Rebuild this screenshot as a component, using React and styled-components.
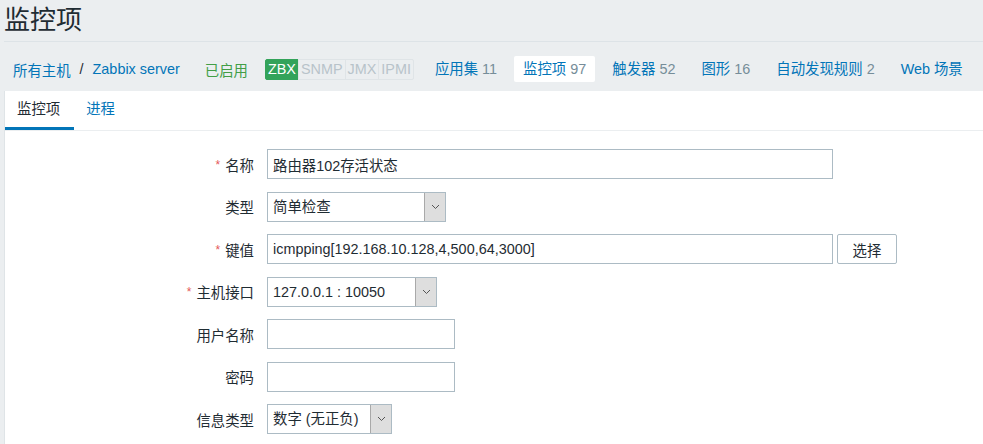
import styled, { createGlobalStyle } from "styled-components";

const GlobalStyle = createGlobalStyle`
  html, body {
    margin: 0;
    padding: 0;
    background: #ebeef0;
  }
  body {
    font-family: "Liberation Sans", Arial, "Noto Sans CJK SC", sans-serif;
    font-size: 14.4px;
    color: #1f2c33;
    overflow: hidden;
  }
`;

const nav = [
  { name: "应用集", count: 11 },
  { name: "监控项", count: 97, active: true },
  { name: "触发器", count: 52 },
  { name: "图形", count: 16 },
  { name: "自动发现规则", count: 2 },
  { name: "Web 场景" },
];

const tags = [
  { name: "ZBX", on: true },
  { name: "SNMP" },
  { name: "JMX" },
  { name: "IPMI" },
];

function Chevron() {
  return (
    <svg width="9" height="6" viewBox="0 0 9 6">
      <path d="M1 1l3.5 3.5L8 1" fill="none" stroke="#555" strokeWidth="1" />
    </svg>
  );
}

function Select({ value, width }) {
  return (
    <SelectBox width={width}>
      <span>{value}</span>
      <SelectButton>
        <Chevron />
      </SelectButton>
    </SelectBox>
  );
}

export default function App() {
  return (
    <Page>
      <GlobalStyle />
      <Title>监控项</Title>

      <Nav>
        <Crumbs>
          <Link>所有主机</Link>
          <Sep>/</Sep>
          <Link>Zabbix server</Link>
        </Crumbs>
        <Status>已启用</Status>
        <Tags>
          {tags.map((t) => (
            <Tag key={t.name} on={t.on}>{t.name}</Tag>
          ))}
        </Tags>
        <NavTabs>
          {nav.map((n) => (
            <NavTab key={n.name} active={n.active}>
              {n.name}
              {n.count !== undefined && <Count> {n.count}</Count>}
            </NavTab>
          ))}
        </NavTabs>
      </Nav>

      <Panel>
        <TabBar>
          <Tab active>监控项</Tab>
          <Tab>进程</Tab>
        </TabBar>

        <Form>
          <Row>
            <Label required>名称</Label>
            <Input width={566} value="路由器102存活状态" readOnly />
          </Row>
          <Row>
            <Label>类型</Label>
            <Select value="简单检查" width={179} />
          </Row>
          <Row>
            <Label required>键值</Label>
            <Inline>
              <Input width={566} value="icmpping[192.168.10.128,4,500,64,3000]" readOnly />
              <Button>选择</Button>
            </Inline>
          </Row>
          <Row>
            <Label required>主机接口</Label>
            <Select value="127.0.0.1 : 10050" width={170} />
          </Row>
          <Row>
            <Label>用户名称</Label>
            <Input width={188} readOnly />
          </Row>
          <Row>
            <Label>密码</Label>
            <Input width={188} readOnly />
          </Row>
          <Row>
            <Label>信息类型</Label>
            <Select value="数字 (无正负)" width={125} />
          </Row>
        </Form>
      </Panel>
    </Page>
  );
}

const Page = styled.div`
  padding-left: 4px;
  height: 444px;
  display: flex;
  flex-direction: column;
`;

const Title = styled.h1`
  margin: 0;
  font-size: 26px;
  font-weight: normal;
  line-height: 41px;
  color: #1f2c33;
  border-bottom: 1px solid #dde3e7;
`;

const Nav = styled.div`
  display: flex;
  align-items: center;
  padding: 14px 0 9px 9px;
  white-space: nowrap;
`;

const Crumbs = styled.div`
  display: flex;
  align-items: center;
`;

const Link = styled.span`
  color: #0275b8;
`;

const Sep = styled.span`
  margin: 0 9px;
  color: #1f2c33;
`;

const Status = styled.span`
  margin-left: 25px;
  color: #429e47;
`;

const Tags = styled.div`
  display: flex;
  margin-left: 17px;
`;

const Tag = styled.span`
  height: 21px;
  line-height: 19px;
  box-sizing: border-box;
  padding: 0 2px;
  border: 1px solid ${(p) => (p.on ? "#33a35a" : "#dfe4e7")};
  background: ${(p) => (p.on ? "#33a35a" : "#ebeef0")};
  color: ${(p) => (p.on ? "#fff" : "#b8c3ca")};
  border-radius: ${(p) => (p.on ? "2px 0 0 2px" : "0")};
  &:last-child {
    border-radius: 0 2px 2px 0;
  }
  & + & {
    margin-left: -1px;
  }
`;

const NavTabs = styled.div`
  display: flex;
  gap: 8px;
  margin-left: 12px;
`;

const NavTab = styled.span`
  height: 26px;
  line-height: 26px;
  padding: 0 9px;
  color: #0275b8;
  background: ${(p) => (p.active ? "#fff" : "transparent")};
  border-radius: 2px;
`;

const Count = styled.span`
  color: #768d99;
`;

const Panel = styled.div`
  flex: 1;
  background: #fff;
  border-left: 1px solid #dfe4e7;
`;

const TabBar = styled.div`
  display: flex;
  border-bottom: 1px solid #ebeef0;
`;

const Tab = styled.div`
  box-sizing: border-box;
  height: 39px;
  line-height: 36px;
  padding: 0 14px 0 12px;
  color: ${(p) => (p.active ? "#1f2c33" : "#0275b8")};
  border-bottom: 3px solid ${(p) => (p.active ? "#0275b8" : "transparent")};
`;

const Form = styled.div`
  display: flex;
  flex-direction: column;
  gap: 12.5px;
  padding-top: 18px;
`;

const Row = styled.div`
  display: grid;
  grid-template-columns: 249px auto;
  column-gap: 13px;
  align-items: center;
  height: 30px;
`;

const Label = styled.div`
  text-align: right;
  color: #1f2c33;
  &::before {
    content: ${(p) => (p.required ? "'*'" : "none")};
    color: #e45959;
    margin-right: 5px;
    font-size: 12px;
    vertical-align: 2px;
  }
`;

const Input = styled.input`
  box-sizing: border-box;
  width: ${(p) => p.width}px;
  height: 30px;
  border: 1px solid #acbbc4;
  padding: 0 5px;
  font: inherit;
  color: #1f2c33;
  outline: none;
  background: #fff;
`;

const Inline = styled.div`
  display: flex;
  gap: 4px;
`;

const Button = styled.button`
  box-sizing: border-box;
  width: 60px;
  height: 30px;
  border: 1px solid #acbbc4;
  border-radius: 2px;
  background: #fff;
  font: inherit;
  color: #1f2c33;
  padding: 0;
`;

const SelectBox = styled.div`
  box-sizing: border-box;
  width: ${(p) => p.width}px;
  height: 30px;
  display: flex;
  align-items: stretch;
  border: 1px solid #acbbc4;
  background: #fff;
  span {
    flex: 1;
    padding-left: 5px;
    line-height: 28px;
    white-space: nowrap;
    overflow: hidden;
  }
`;

const SelectButton = styled.div`
  width: 20px;
  display: flex;
  align-items: center;
  justify-content: center;
  background: #dedede;
  border-left: 1px solid #a9a9a9;
`;
